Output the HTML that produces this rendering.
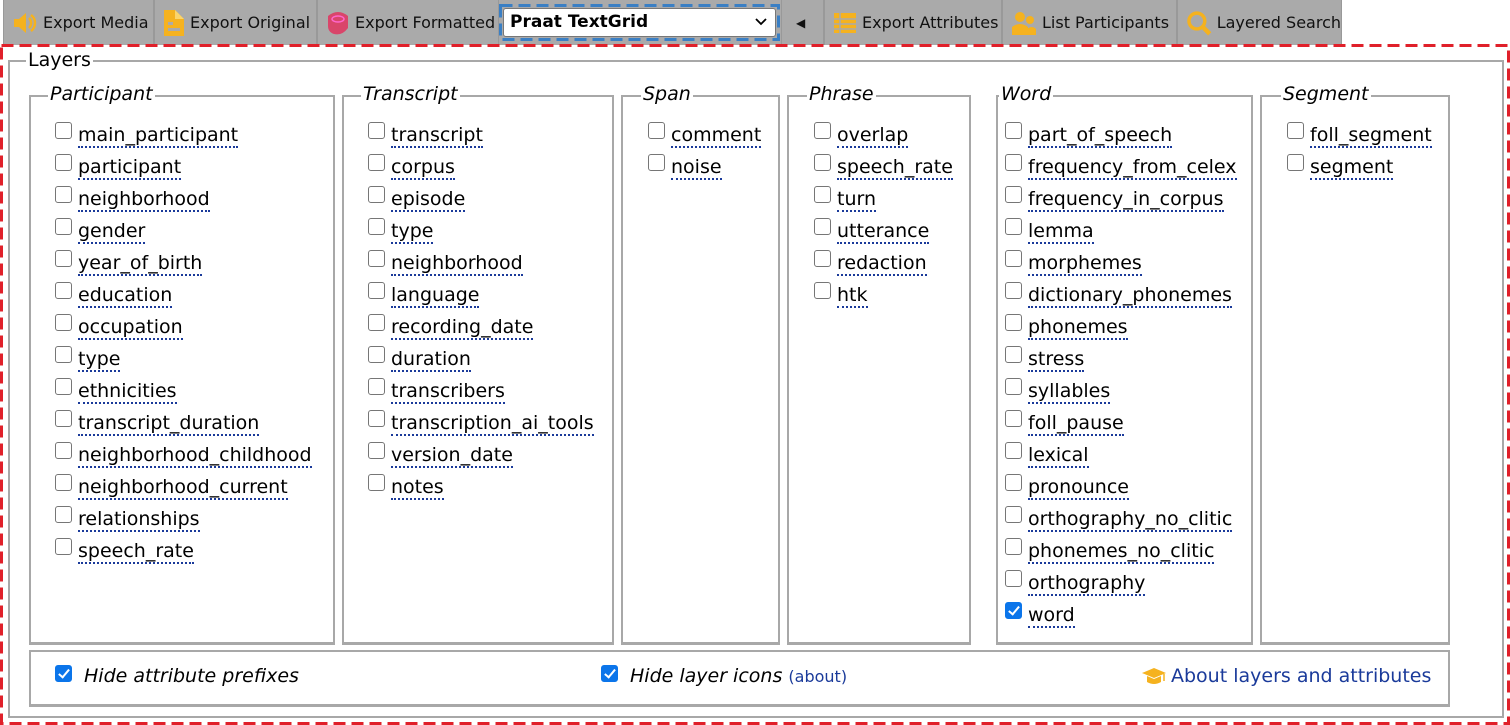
<!DOCTYPE html>
<html><head><meta charset="utf-8"><style>
*{box-sizing:border-box}
body{margin:0;width:1510px;height:725px;background:#fff;font-family:"DejaVu Sans","Liberation Sans",sans-serif;position:relative;overflow:hidden;color:#000}
.btn{position:absolute;top:0;height:45px;background:#aaa;border-left:1px solid #999;border-right:1px solid #999;display:flex;align-items:center;font-size:16px;color:#111;padding-left:8px;white-space:nowrap}
.btn svg{margin-right:5px}
.fs{position:absolute;border:2px solid #a8a8a8;border-bottom-width:3px}
.lg{position:absolute;background:#fff;font-style:italic;font-size:19px;padding:0 2px;line-height:22px;font-family:"DejaVu Sans","Liberation Sans",sans-serif}
.it{position:absolute;font-size:19px;line-height:22px;white-space:nowrap}
.it span{border-bottom:2px dotted #1a3a9a}
.cb{position:absolute;width:17px;height:17px;border:1.5px solid #767676;border-radius:3px;background:#fff}
.cb.on{background:#0b75ea;border-color:#0b75ea}
.cb.on:after{content:"";position:absolute;left:4.5px;top:1px;width:4px;height:9px;border:solid #fff;border-width:0 2.5px 2.5px 0;transform:rotate(40deg)}
</style></head><body>
<div class="btn" style="left:3px;width:151px"><svg width="26" height="26" viewBox="0 0 26 26"><path d="M2 9h5l7-6v20l-7-6H2z" fill="#f5b21f"/><path d="M17 8a7 7 0 0 1 0 10M19 5a10 10 0 0 1 0 16" stroke="#f5b21f" stroke-width="2.5" fill="none"/></svg>Export Media</div>
<div class="btn" style="left:154px;width:163px"><svg width="22" height="28" viewBox="0 0 22 28"><path d="M1 1h11l9 9v17H1z" fill="#f5b21f"/><path d="M12 1v9h9" fill="#fbd46b"/><rect x="5" y="19" width="12" height="3" fill="#aaa"/><rect x="5" y="13" width="5" height="3" fill="#aaa"/></svg>Export Original</div>
<div class="btn" style="left:317px;width:182px"><svg width="24" height="26" viewBox="0 0 24 26"><path d="M2 6q10-8 20 0v12q-6 8-14 6q-6-2-6-8z" fill="#d9456a"/><ellipse cx="12" cy="9" rx="6" ry="3" stroke="#f6c" fill="none" stroke-width="1.5"/></svg>Export Formatted</div>
<div style="position:absolute;left:499px;top:0;width:282px;height:45px;background:#aaa"></div>
<svg style="position:absolute;left:499px;top:4px" width="281" height="37"><rect x="1.5" y="1.5" width="278" height="34" fill="none" stroke="#3a7fc4" stroke-width="3" stroke-dasharray="12 6"/></svg>
<div style="position:absolute;left:503px;top:8px;width:273px;height:29px;background:#fff;border:1px solid #777;border-radius:3px;font-weight:bold;font-size:17px;padding-left:6px;line-height:27px">Praat TextGrid<svg style="position:absolute;right:8px;top:9px" width="12" height="8"><path d="M1 1l5 5 5-5" stroke="#000" stroke-width="1.8" fill="none"/></svg></div>
<div class="btn" style="left:781px;width:43px;padding-left:14px;font-size:12px">&#9664;</div>
<div class="btn" style="left:824px;width:178px"><svg width="24" height="22" viewBox="0 0 24 22"><rect x="1" y="1" width="22" height="20" fill="#f5b21f"/><path d="M1 7h22M1 12h22M1 17h22M7 1v20" stroke="#aaa" stroke-width="1.5"/></svg>Export Attributes</div>
<div class="btn" style="left:1002px;width:175px"><svg width="26" height="26" viewBox="0 0 26 26"><circle cx="9" cy="7" r="5" fill="#f5b21f"/><circle cx="19" cy="10" r="4" fill="#f5b21f"/><path d="M1 25v-8q8-6 16 0v8zM16 25v-6q5-4 9 0v6z" fill="#f5b21f"/></svg>List Participants</div>
<div class="btn" style="left:1177px;width:165px"><svg width="26" height="26" viewBox="0 0 26 26"><circle cx="11" cy="11" r="8" stroke="#f5b21f" stroke-width="3.5" fill="none"/><path d="M17 17l7 7" stroke="#f5b21f" stroke-width="4.5"/></svg>Layered Search</div>
<svg style="position:absolute;left:0;top:44px" width="1510" height="681"><rect x="1.5" y="1.5" width="1507" height="678" fill="none" stroke="#e0202a" stroke-width="3" stroke-dasharray="12 6"/></svg>
<div class="fs" style="left:8px;top:60px;width:1496px;height:658px;border-width:2px"></div>
<div class="lg" style="left:26px;top:49px;font-style:normal">Layers</div>

<div class="fs" style="left:29px;top:95px;width:306px;height:550px"></div><div class="lg" style="left:48px;top:83px">Participant</div>
<div class="fs" style="left:342px;top:95px;width:272px;height:550px"></div><div class="lg" style="left:361px;top:83px">Transcript</div>
<div class="fs" style="left:621px;top:95px;width:159px;height:550px"></div><div class="lg" style="left:641px;top:83px">Span</div>
<div class="fs" style="left:787px;top:95px;width:184px;height:550px"></div><div class="lg" style="left:807px;top:83px">Phrase</div>
<div class="fs" style="left:996px;top:95px;width:257px;height:550px"></div><div class="lg" style="left:999px;top:83px">Word</div>
<div class="fs" style="left:1260px;top:95px;width:190px;height:550px"></div><div class="lg" style="left:1281px;top:83px">Segment</div>
<div class="fs" style="left:29px;top:650px;width:1421px;height:57px"></div>

<div id="items"></div>
<script>
var cols=[[55,["main_participant","participant","neighborhood","gender","year_of_birth","education","occupation","type","ethnicities","transcript_duration","neighborhood_childhood","neighborhood_current","relationships","speech_rate"]],
[368,["transcript","corpus","episode","type","neighborhood","language","recording_date","duration","transcribers","transcription_ai_tools","version_date","notes"]],
[648,["comment","noise"]],
[814,["overlap","speech_rate","turn","utterance","redaction","htk"]],
[1005,["part_of_speech","frequency_from_celex","frequency_in_corpus","lemma","morphemes","dictionary_phonemes","phonemes","stress","syllables","foll_pause","lexical","pronounce","orthography_no_clitic","phonemes_no_clitic","orthography","word"]],
[1287,["foll_segment","segment"]]];
var h="";cols.forEach(function(c){c[1].forEach(function(t,i){var y=134+32*i;var on=(t=="word")?" on":"";
h+='<div class="cb'+on+'" style="left:'+c[0]+'px;top:'+(y-12)+'px"></div><div class="it" style="left:'+(c[0]+23)+'px;top:'+(y-10)+'px"><span>'+t+'</span></div>';});});
document.getElementById("items").innerHTML=h;
</script>
<div class="cb on" style="left:55px;top:665px"></div><div class="it" style="left:84px;top:665px;font-style:italic">Hide attribute prefixes</div>
<div class="cb on" style="left:601px;top:665px"></div><div class="it" style="left:630px;top:665px;font-style:italic">Hide layer icons <span style="font-style:normal;font-size:16px;color:#1a3a9a;border:0">(about)</span></div>
<svg style="position:absolute;left:1141px;top:667px" width="26" height="20" viewBox="0 0 26 20"><path d="M1 6l12-5 12 5-12 5z" fill="#f5b21f"/><path d="M6 9v6q7 4 14 0v-6l-7 3z" fill="#f5b21f"/><path d="M23 7v7" stroke="#f5b21f" stroke-width="1.5"/></svg>
<div class="it" style="left:1171px;top:665px;color:#1a3a9a">About layers and attributes</div>
</body></html>
